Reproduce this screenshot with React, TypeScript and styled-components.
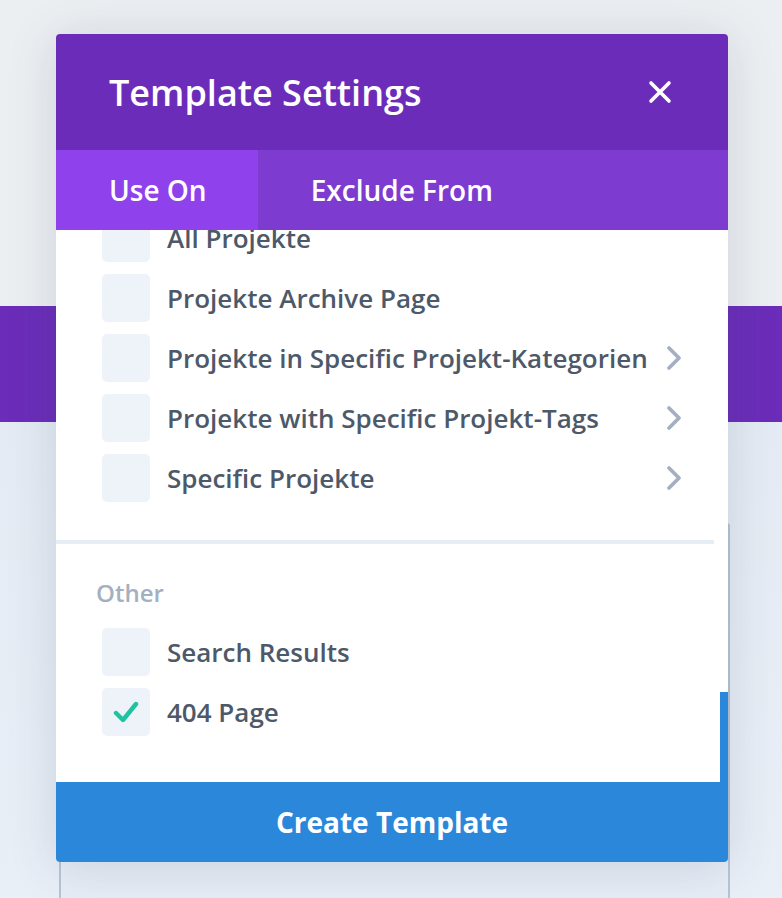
import React from "react";
import styled, { createGlobalStyle } from "styled-components";

const GlobalStyle = createGlobalStyle`
    html, body {
        margin: 0;
        padding: 0;
        background: #eceff3;
    }
    * {
        box-sizing: border-box;
    }
`;

const useOnGroups = [
    {
        title: "Projekte",
        items: [
            { label: "All Projekte", nested: false },
            { label: "Projekte Archive Page", nested: false },
            { label: "Projekte in Specific Projekt-Kategorien", nested: true },
            { label: "Projekte with Specific Projekt-Tags", nested: true },
            { label: "Specific Projekte", nested: true },
        ],
    },
    {
        title: "Other",
        items: [
            { label: "Search Results", nested: false },
            { label: "404 Page", nested: false, checked: true },
        ],
    },
];

const CloseIcon = () => (
    <svg width="24" height="24" viewBox="0 0 24 24">
        <path d="M3 3 L21 21 M21 3 L3 21" stroke="#fff" strokeWidth="3.6" strokeLinecap="round" />
    </svg>
);

const ChevronIcon = () => (
    <svg width="16" height="26" viewBox="0 0 16 26">
        <path d="M3 3 L13 13 L3 23" fill="none" stroke="#a4b0c1" strokeWidth="3.8" strokeLinecap="round" strokeLinejoin="round" />
    </svg>
);

const CheckIcon = () => (
    <svg width="26" height="22" viewBox="0 0 26 22">
        <path d="M3 12 L10 19 L23 3" fill="none" stroke="#1fc3a0" strokeWidth="4.4" strokeLinecap="round" strokeLinejoin="round" />
    </svg>
);

const App = () => {
    return (
        <>
            <GlobalStyle />
            <Page>
                <TopArea />
                <Band />
                <LowerArea>
                    <BackCard />
                </LowerArea>

                <Modal>
                    <Header>
                        <Title>Template Settings</Title>
                        <CloseButton aria-label="Close">
                            <CloseIcon />
                        </CloseButton>
                    </Header>
                    <Tabs>
                        <Tab active>Use On</Tab>
                        <Tab>Exclude From</Tab>
                    </Tabs>
                    <Body>
                        <ScrollArea>
                            {useOnGroups.map((group, gi) => (
                                <Group key={group.title} last={gi === useOnGroups.length - 1}>
                                    {gi > 0 && <GroupTitle>{group.title}</GroupTitle>}
                                    {group.items.map((item) => (
                                        <Row key={item.label}>
                                            <CheckBox>{item.checked && <CheckIcon />}</CheckBox>
                                            <RowLabel>{item.label}</RowLabel>
                                            {item.nested && (
                                                <Arrow>
                                                    <ChevronIcon />
                                                </Arrow>
                                            )}
                                        </Row>
                                    ))}
                                </Group>
                            ))}
                        </ScrollArea>
                        <Rail>
                            <Thumb />
                        </Rail>
                    </Body>
                    <CreateButton>Create Template</CreateButton>
                </Modal>
            </Page>
        </>
    );
};

export default App;

const Page = styled.div`
    position: relative;
    width: 782px;
    height: 898px;
    overflow: hidden;
    display: flex;
    flex-direction: column;
    font-family: "Open Sans", "Liberation Sans", sans-serif;
`;

const TopArea = styled.div`
    height: 306px;
    background: #eceff2;
`;

const Band = styled.div`
    height: 116px;
    background: #6b2db9;
`;

const LowerArea = styled.div`
    flex: 1;
    padding: 101px 52px 0 59px;
    background: linear-gradient(180deg, #e4ebf4 0%, #e9eff7 100%);
`;

const BackCard = styled.div`
    height: 100%;
    border-left: 2px solid #b6c4d6;
    border-right: 2px solid #b6c4d6;
    border-top-right-radius: 3px;
    background: #e6edf6;
`;

const Modal = styled.div`
    position: absolute;
    left: 56px;
    top: 34px;
    width: 672px;
    height: 828px;
    display: flex;
    flex-direction: column;
    border-radius: 4px;
    overflow: hidden;
    background: #fff;
    box-shadow: 0 4px 50px rgba(46, 64, 96, 0.16);
`;

const Header = styled.div`
    height: 116px;
    flex-shrink: 0;
    display: flex;
    align-items: center;
    justify-content: space-between;
    padding: 0 56px 0 53px;
    background: #6b2db9;
`;

const Title = styled.h1`
    margin: 0;
    color: #fff;
    font-size: 36px;
    font-weight: 600;
`;

const CloseButton = styled.button`
    display: flex;
    padding: 0;
    border: 0;
    background: none;
    cursor: pointer;
`;

const Tabs = styled.div`
    height: 80px;
    flex-shrink: 0;
    display: flex;
    background: #7e3bd0;
`;

const Tab = styled.div<{ active?: boolean }>`
    display: flex;
    align-items: center;
    padding: 0 51px 0 53px;
    color: #fff;
    font-size: 28px;
    font-weight: 600;
    background: ${(p) => (p.active ? "#8f42ec" : "transparent")};
`;

const Body = styled.div`
    flex: 1;
    min-height: 0;
    display: flex;
`;

const ScrollArea = styled.div`
    flex: 1;
    display: flex;
    flex-direction: column;
    justify-content: flex-end;
    overflow: hidden;
`;

const Group = styled.div<{ last?: boolean }>`
    display: flex;
    flex-direction: column;
    gap: 12px;
    padding: ${(p) => (p.last ? "31px 0 46px" : "0 0 38px")};
    margin-right: 6px;
    border-bottom: ${(p) => (p.last ? "none" : "4px solid #e6edf5")};
`;

const GroupTitle = styled.div`
    height: 34px;
    margin-bottom: 7px;
    padding-left: 40px;
    display: flex;
    align-items: center;
    color: #a3b0c2;
    font-size: 24px;
    font-weight: 600;
`;

const Row = styled.div`
    height: 48px;
    display: flex;
    align-items: center;
    padding: 0 32px 0 46px;
`;

const CheckBox = styled.div`
    width: 48px;
    height: 48px;
    flex-shrink: 0;
    display: flex;
    align-items: center;
    justify-content: center;
    border-radius: 5px;
    background: #eef2f9;
`;

const RowLabel = styled.span`
    flex: 1;
    margin-left: 17px;
    color: #4d5969;
    font-size: 26px;
    font-weight: 600;
    white-space: nowrap;
`;

const Arrow = styled.span`
    display: flex;
    margin-left: 12px;
`;

const Rail = styled.div`
    width: 8px;
    display: flex;
    flex-direction: column;
    justify-content: flex-end;
    background: #fff;
`;

const Thumb = styled.div`
    height: 90px;
    background: #2b87da;
`;

const CreateButton = styled.button`
    height: 80px;
    flex-shrink: 0;
    border: 0;
    background: #2b87da;
    color: #fff;
    font-family: inherit;
    font-size: 28px;
    font-weight: 700;
    cursor: pointer;
`;
